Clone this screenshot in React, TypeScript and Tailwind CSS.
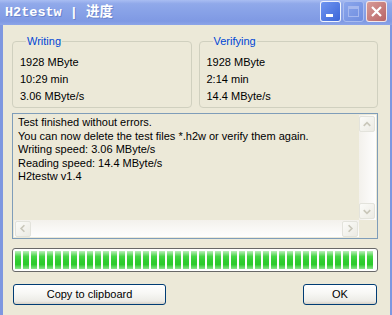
import React from "react";

const font = { fontFamily: '"Liberation Sans", Arial, sans-serif' };

function GroupBox({ title, lines }: { title: string; lines: string[] }) {
  return (
    <fieldset className="flex-1 border border-[#d0d0bf] rounded-[4px] pl-[7px] pb-[2px] pt-[6px] min-w-0">
      <legend className="ml-[6px] px-[1px] text-[#0046d5] leading-[13px]">{title}</legend>
      {lines.map((l) => (
        <div key={l} className="leading-[17px] text-black">
          {l}
        </div>
      ))}
    </fieldset>
  );
}

function ScrollBtn({ dir }: { dir: "up" | "down" | "left" | "right" }) {
  const paths: Record<string, string> = {
    up: "M4 9 L7.5 5.5 L11 9",
    down: "M4 6 L7.5 9.5 L11 6",
    left: "M9 4 L5.5 7.5 L9 11",
    right: "M6 4 L9.5 7.5 L6 11",
  };
  return (
    <div className="w-[16px] h-[16px] shrink-0 rounded-[2px] border border-[#e3e3dc] bg-gradient-to-br from-[#fbfbf8] to-[#ecebe4] flex items-center justify-center">
      <svg width="15" height="15" viewBox="0 0 15 15">
        <path d={paths[dir]} fill="none" stroke="#c9c7ba" strokeWidth="1.8" />
      </svg>
    </div>
  );
}

function XPButton({ label, className }: { label: string; className: string }) {
  return (
    <div
      className={`h-[21px] rounded-[3px] border border-[#003c74] flex items-center justify-center text-black ${className}`}
      style={{ background: "linear-gradient(to bottom, #ffffff 0%, #f7f7f4 45%, #ecebe6 85%, #d6d0c5 100%)" }}
    >
      {label}
    </div>
  );
}

export default function App() {
  const blocks = Array.from({ length: 45 }, (_, i) => i);
  return (
    <div className="w-[392px] h-[315px] overflow-hidden flex flex-col bg-[#7e97e0] text-[11px]" style={font}>
      {/* Title bar */}
      <div
        className="h-[25px] shrink-0 flex items-center pl-[5px] pr-[5px]"
        style={{ background: "linear-gradient(to bottom, #a9bdf2 0%, #90a9ea 15%, #87a1e7 50%, #7f99e3 85%, #8ca5e8 100%)" }}
      >
        <div
          className="flex-1 text-white font-bold text-[13.5px] leading-[25px] whitespace-pre"
          style={{ fontFamily: '"Liberation Mono", "Noto Sans CJK SC", monospace', textShadow: "1px 1px 0 #6a84cc" }}
        >
          H2testw | 进度
        </div>
        <div className="flex gap-[2px] items-center mb-[2px]">
          <div className="w-[21px] h-[21px] rounded-[3px] border border-white/90 flex items-end pl-[5px] pb-[4px]" style={{ background: "linear-gradient(135deg, #6f95f0, #3c66d8)" }}>
            <div className="w-[7px] h-[3px] bg-white" />
          </div>
          <div className="w-[21px] h-[21px] rounded-[3px] border border-[#a9bcef] flex items-center justify-center" style={{ background: "linear-gradient(135deg, #8ba6ec, #6f8ddf)" }}>
            <div className="w-[11px] h-[11px] border border-[#a6b8ee] border-t-[3px]" />
          </div>
          <div className="w-[21px] h-[21px] rounded-[3px] border border-white/80 flex items-center justify-center" style={{ background: "linear-gradient(135deg, #d79b97, #b96466)" }}>
            <svg width="13" height="13" viewBox="0 0 13 13">
              <path d="M2 2 L11 11 M11 2 L2 11" stroke="white" strokeWidth="2.2" />
            </svg>
          </div>
        </div>
      </div>

      {/* Client */}
      <div className="flex-1 ml-[3px] mr-[2px] bg-[#ece9d8] pl-[9px] pr-[12px] pt-[10px] flex flex-col">
        <div className="flex gap-[7px]">
          <GroupBox title="Writing" lines={["1928 MByte", "10:29 min", "3.06 MByte/s"]} />
          <GroupBox title="Verifying" lines={["1928 MByte", "2:14 min", "14.4 MByte/s"]} />
        </div>

        {/* Memo */}
        <div className="mt-[5px] h-[126px] border border-[#7f9db9] bg-[#ece9d8] flex flex-col p-[1px]">
          <div className="flex flex-1 min-h-0">
            <div className="flex-1 pl-[4px] pt-[1px] leading-[13.5px] text-black">
              <div>Test finished without errors.</div>
              <div>You can now delete the test files *.h2w or verify them again.</div>
              <div>Writing speed: 3.06 MByte/s</div>
              <div>Reading speed: 14.4 MByte/s</div>
              <div>H2testw v1.4</div>
            </div>
            <div className="w-[17px] flex flex-col justify-between bg-gradient-to-r from-[#f3f1ec] to-[#fefefe] py-[1px]">
              <ScrollBtn dir="up" />
              <ScrollBtn dir="down" />
            </div>
          </div>
          <div className="flex h-[17px]">
            <div className="flex-1 flex justify-between items-center bg-gradient-to-b from-[#f3f1ec] to-[#fefefe] px-[1px]">
              <ScrollBtn dir="left" />
              <ScrollBtn dir="right" />
            </div>
            <div className="w-[17px] bg-[#ece9d8]" />
          </div>
        </div>

        {/* Progress */}
        <div className="mt-[9px] h-[24px] border border-[#686868] rounded-[3px] bg-white px-[2px] py-[2px] flex gap-[2px]">
          {blocks.map((i) => (
            <div
              key={i}
              className="w-[6px] h-full"
              style={{ background: "linear-gradient(to bottom, #bdefbd 0%, #46d646 30%, #2fcc2f 55%, #2ccb2c 75%, #8be48b 100%)" }}
            />
          ))}
        </div>

        {/* Buttons */}
        <div className="mt-[12px] flex justify-between pl-[1px] pr-[1px]">
          <XPButton label="Copy to clipboard" className="w-[153px]" />
          <XPButton label="OK" className="w-[74px]" />
        </div>
      </div>
    </div>
  );
}
